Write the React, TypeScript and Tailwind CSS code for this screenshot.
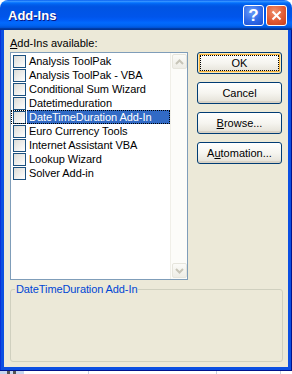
import React from "react";

const items = [
  "Analysis ToolPak",
  "Analysis ToolPak - VBA",
  "Conditional Sum Wizard",
  "Datetimeduration",
  "DateTimeDuration Add-In",
  "Euro Currency Tools",
  "Internet Assistant VBA",
  "Lookup Wizard",
  "Solver Add-in",
];

function Checkbox() {
  return (
    <div className="w-[13px] h-[13px] shrink-0 border border-[#1c5180] bg-gradient-to-br from-[#dcdcd7] to-white" />
  );
}

function XpButton({ children, isDefault }: { children: React.ReactNode; isDefault?: boolean }) {
  return (
    <div
      className={
        "h-[22px] w-[85px] rounded-[3px] border border-[#003c74] bg-gradient-to-b from-white via-[#f6f5f0] to-[#e3e0d6] flex items-center justify-center text-black " +
        (isDefault
          ? "shadow-[inset_0_0_0_1px_#fce9b8,inset_0_0_0_2px_#f5b43c] outline-1 outline-dotted outline-black -outline-offset-4"
          : "shadow-[inset_0_-2px_0_#d8d2c6]")
      }
    >
      {children}
    </div>
  );
}

function ScrollBtn({ up }: { up?: boolean }) {
  return (
    <div className="h-[15px] w-[15px] rounded-[2px] border border-[#e6e5dc] bg-gradient-to-b from-[#fbfbf8] to-[#eeede6] flex items-center justify-center">
      <svg width="9" height="6" viewBox="0 0 9 6">
        <path
          d={up ? "M1 5 L4.5 1.5 L8 5" : "M1 1 L4.5 4.5 L8 1"}
          fill="none"
          stroke="#c7c5b8"
          strokeWidth="2"
        />
      </svg>
    </div>
  );
}

export default function App() {
  return (
    <div
      className="w-[292px] h-[374px] bg-white overflow-hidden flex flex-col text-[11px] leading-[13px]"
      style={{ fontFamily: '"Liberation Sans", Arial, sans-serif' }}
    >
      <div className="h-[371px] flex flex-col shrink-0">
        {/* Title bar */}
        <div className="h-[30px] shrink-0 rounded-t-[8px] bg-[linear-gradient(to_bottom,#0058ee_0%,#3a93ff_4%,#288eff_6%,#127dff_8%,#036ffc_10%,#0262ee_14%,#0057e5_20%,#0054e3_24%,#0055eb_56%,#005bf5_66%,#026afe_76%,#0062ef_86%,#0052d6_92%,#0040ab_94%,#003092_100%)] flex items-center pl-[8px] pr-[5px]">
          <span className="text-white font-bold text-[13px] leading-none [text-shadow:1px_1px_#0a1883]">
            Add-Ins
          </span>
          <div className="ml-auto flex gap-[2px]">
            <div className="w-[21px] h-[21px] rounded-[3px] border border-white bg-[radial-gradient(circle_at_40%_30%,#6c9cf8_0%,#2f6ae8_55%,#1d4fd0_100%)] flex items-center justify-center">
              <span className="text-white font-bold text-[17px] leading-none">?</span>
            </div>
            <div className="w-[21px] h-[21px] rounded-[3px] border border-white bg-[radial-gradient(circle_at_40%_30%,#f0906c_0%,#e05a34_55%,#c8401c_100%)] flex items-center justify-center">
              <svg width="11" height="11" viewBox="0 0 11 11">
                <path d="M1.5 1.5 L9.5 9.5 M9.5 1.5 L1.5 9.5" stroke="white" strokeWidth="2" />
              </svg>
            </div>
          </div>
        </div>

        {/* Frame + client */}
        <div className="flex-1 flex flex-col bg-[#0b4fe2] px-[4px] pb-[4px] shadow-[inset_-1px_-1px_#00138c,inset_1px_0_#0831d9]">
          <div className="flex-1 bg-[#ece9d8] flex flex-col pt-[7px] pl-[6px] pr-[5px]">
            <div className="flex">
              <div className="flex flex-col w-[178px]">
                <div className="h-[13px]">
                  <u>A</u>dd-Ins available:
                </div>
                <div className="mt-[2px] h-[228px] border border-[#7f9db9] bg-white flex">
                  <div className="flex-1 pt-[1px] flex flex-col tracking-[-0.05px]">
                    {items.map((it, i) => {
                      const sel = i === 4;
                      return (
                        <div
                          key={it}
                          className={
                            "h-[14px] flex items-center pl-[2px] " +
                            (sel ? "outline-1 outline-dotted outline-black -outline-offset-1" : "")
                          }
                        >
                          <Checkbox />
                          <div
                            className={
                              "ml-[1px] pl-[2px] flex-1 h-full flex items-center whitespace-nowrap " +
                              (sel ? "bg-[#316ac5] text-white" : "text-black")
                            }
                          >
                            {it}
                          </div>
                        </div>
                      );
                    })}
                  </div>
                  <div className="w-[17px] bg-[#fcfcf9] border-l border-[#f0efe8] flex flex-col justify-between py-[1px] pl-[1px]">
                    <ScrollBtn up />
                    <ScrollBtn />
                  </div>
                </div>
              </div>
              <div className="ml-[9px] pt-[15px] flex flex-col gap-[8px]">
                <XpButton isDefault>OK</XpButton>
                <XpButton>Cancel</XpButton>
                <XpButton>
                  <span>
                    <u>B</u>rowse...
                  </span>
                </XpButton>
                <XpButton>
                  <span>
                    A<u>u</u>tomation...
                  </span>
                </XpButton>
              </div>
            </div>
            <fieldset className="mt-[3px] h-[79px] border border-[#d0d0bf] rounded-[3px] pl-[4px] pr-[4px]">
              <legend className="px-[1px] text-[#0046d5] tracking-[-0.1px]">DateTimeDuration Add-In</legend>
            </fieldset>
          </div>
        </div>
      </div>
      {/* Background spreadsheet peek */}
      <div className="flex-1 flex items-start relative">
        <div className="w-[24px] h-full bg-[#c8d6ef] flex items-start gap-[3px] pl-[7px]">
          <div className="w-[3px] h-[3px] bg-[#555]" />
          <div className="w-[3px] h-[3px] bg-[#555]" />
        </div>
        <div className="ml-[64px] w-[1px] h-full bg-[#c9d1e0]" />
        <div className="ml-[127px] w-[1px] h-full bg-[#c9d1e0]" />
        <div className="ml-[63px] w-[1px] h-full bg-[#c9d1e0]" />
      </div>
    </div>
  );
}
